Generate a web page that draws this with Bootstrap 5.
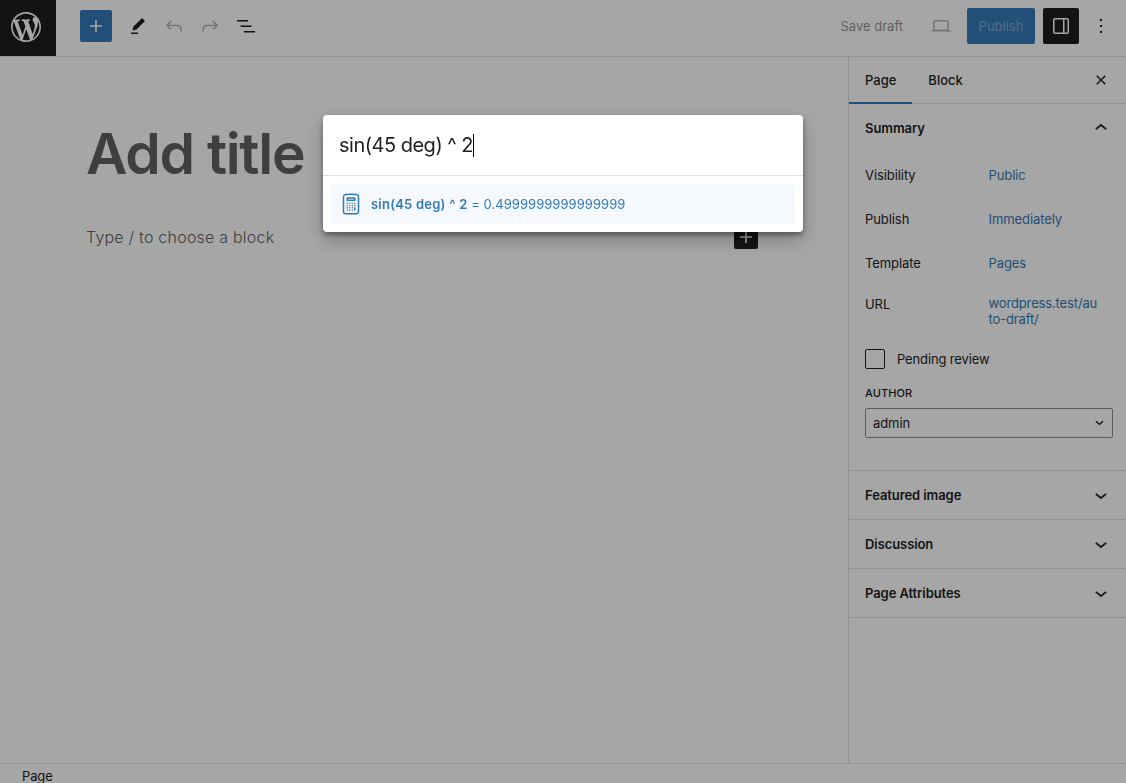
<!DOCTYPE html>
<html lang="en">
<head>
<meta charset="utf-8">
<meta name="viewport" content="width=device-width, initial-scale=1">
<title>Add title</title>
<link href="https://cdn.jsdelivr.net/npm/bootstrap@5.3.0/dist/css/bootstrap.min.css" rel="stylesheet">
<style>
  :root { --accent: #337ab7; --ink: #1e1e1e; --rule: #e0e0e0; }
  body { font-family: Inter, "Liberation Sans", sans-serif; font-size: 13px; line-height: 18px; color: var(--ink); background: #fff; }
  svg { fill: currentColor; display: block; flex: none; }
  .btn { --bs-btn-padding-x: 0; --bs-btn-padding-y: 0; --bs-btn-font-size: 13px; --bs-btn-border-width: 0px; --bs-btn-border-radius: 2px; --bs-btn-color: var(--ink); border-radius: 2px; display: flex; align-items: center; justify-content: center; line-height: 18px; }
  .topbar { height: 57px; border-bottom: 1px solid var(--rule); flex: none; }
  .site-hub { width: 56px; height: 56px; background: var(--ink); color: #fff; padding: 9px 8px; }
  .tool { width: 36px; height: 36px; }
  .inserter { width: 32px; height: 32px; background: var(--accent); color: #fff; }
  .save-draft { color: #949494; }
  .faded { color: #b4b4b4; }
  .laptop { margin: 0 8px 0 20px; }
  .publish { width: 68px; height: 36px; background: #377cba; color: #82a9ce; }
  .dark { background: var(--ink); color: #fff; }
  .more { margin: 0 7px 0 4px; }
  .canvas { padding: 63px 90px 0 86px; }
  .post-title { font-size: 57px; font-weight: 600; line-height: 68px; color: #626262; margin: 0 0 36px; letter-spacing: -1.3px; white-space: nowrap; }
  .prompt { font-size: 16px; line-height: 26px; color: #626262; font-weight: 300; letter-spacing: .22px; }
  .block-add { width: 24px; height: 24px; margin-top: 1px; }
  .sidebar { width: 278px; border-left: 1px solid var(--rule); flex: none; letter-spacing: -.08px; }
  .tabs { height: 47px; border-bottom: 1px solid var(--rule); padding-right: 13px; }
  .tabs .nav-link { padding: 0 16px; height: 47px; color: var(--ink); font-weight: 500; display: flex; align-items: center; letter-spacing: 0; }
  .tabs .nav-link.active { box-shadow: inset 0 -2px var(--accent); }
  .panel-head { height: 49px; padding: 0 13px 0 16px; font-weight: 600; border-bottom: 1px solid var(--rule); }
  .panel-head svg { stroke: currentColor; stroke-width: .35; }
  .panel-open { padding-bottom: 1px; border-bottom: 0; }
  .panel-body { padding: 0 13px 32px 16px; border-bottom: 1px solid var(--rule); }
  .meta-row { height: 44px; }
  .meta-label { width: 123.5px; flex: none; }
  .url-row { height: 64px; padding-top: 10px; line-height: 16px; }
  .url-row .meta-label { padding-top: 1px; }
  .url-row .linked, .pending label { letter-spacing: -.14px; }
  .pending { gap: 12px; height: 20px; margin-bottom: 16px; }
  .linked { color: var(--accent); text-decoration: none; }
  .form-check-input { width: 20px; height: 20px; margin: 0; border: 1px solid var(--ink); }
  .form-check-input[type=checkbox] { border-radius: 2px; }
  .field-label { font-size: 11px; font-weight: 500; line-height: 16px; text-transform: uppercase; letter-spacing: .1px; margin-bottom: 7px; }
  .form-select { height: 30px; font-size: 13px; line-height: 18px; padding: 0 8px 0 7px; border: 1px solid #8c8c8c; border-radius: 2px; background: none; color: var(--ink); }
  .footer-bar { height: 20px; border-top: 1px solid var(--rule); padding: 4px 22px 0; line-height: 17px; flex: none; letter-spacing: -.15px; }
  .screen { background: rgba(0,0,0,.35); }
  .palette { width: 480px; margin: 115px auto 0; border: 0; border-radius: 4px; box-shadow: 0 8px 20px rgba(0,0,0,.25), 0 3px 5px rgba(0,0,0,.35); }
  .query { height: 61px; padding: 0 16px; border-bottom: 1px solid #ddd; font-size: 20px; line-height: 24px; letter-spacing: -.5px; }
  .caret { width: 1px; height: 23px; background: #000; }
  .result { height: 40px; margin: 8px; padding-left: 8px; border-radius: 4px; background: #f5f9fd; color: var(--accent); white-space: pre; letter-spacing: .05px; }
  .result b { letter-spacing: .22px; }
</style>
</head>
<body class="vh-100 overflow-hidden">
<div class="d-flex flex-column vh-100">
  <header class="topbar d-flex align-items-start">
    <div class="site-hub"><svg width="36" height="36" viewBox="-2 -2 24 24"><path d="M20 10c0-5.51-4.49-10-10-10C4.48 0 0 4.49 0 10c0 5.52 4.48 10 10 10 5.51 0 10-4.48 10-10zM7.78 15.37L4.37 6.22c.55-.02 1.17-.08 1.17-.08.5-.06.44-1.13-.06-1.11 0 0-1.45.11-2.37.11-.18 0-.37 0-.58-.01C4.12 2.69 6.87 1.11 10 1.11c2.33 0 4.45.87 6.05 2.34-.68-.11-1.65.39-1.65 1.58 0 .74.45 1.36.9 2.1.35.61.55 1.36.55 2.46 0 1.49-1.4 5-1.4 5l-3.03-8.37c.54-.02.82-.17.82-.17.5-.05.44-1.25-.06-1.22 0 0-1.44.12-2.38.12-.87 0-2.33-.12-2.33-.12-.5-.03-.56 1.2-.06 1.22l.92.08 1.26 3.41zM17.41 10c.24-.64.74-1.87.43-4.25.7 1.29 1.05 2.71 1.05 4.25 0 3.29-1.73 6.24-4.4 7.78.97-2.59 1.94-5.2 2.92-7.78zM6.1 18.09C3.12 16.65 1.11 13.53 1.11 10c0-1.3.23-2.48.72-3.59C3.25 10.3 4.67 14.2 6.1 18.09zm4.03-6.63l2.58 6.98c-.86.29-1.76.45-2.71.45-.79 0-1.57-.11-2.29-.33.81-2.38 1.62-4.74 2.42-7.1z"/></svg></div>
    <div class="d-flex align-items-center flex-grow-1 ps-4 pt-2">
      <button class="btn inserter me-2" aria-label="Add block"><svg width="24" height="24" viewBox="0 0 24 24"><path d="M18 11.2h-5.2V6h-1.6v5.2H6v1.6h5.2V18h1.6v-5.2H18z"/></svg></button>
      <button class="btn tool" aria-label="Tools"><svg width="24" height="24" viewBox="0 0 24 24"><path d="m19 7-3-3-8.5 8.5-1 4 4-1L19 7Zm-7 11.5H5V20h7v-1.5Z"/></svg></button>
      <button class="btn tool faded" aria-label="Undo"><svg width="24" height="24" viewBox="0 0 24 24"><path d="M18.3 11.7c-.6-.6-1.4-.9-2.3-.9H6.7l2.9-3.3-1.1-1-4.5 5L8.5 16l1-1-2.7-2.7H16c.5 0 .9.2 1.3.5 1 1 1 3.4 1 4.5v.3h1.5v-.2c0-1.5 0-4.3-1.5-5.7z"/></svg></button>
      <button class="btn tool faded" aria-label="Redo"><svg width="24" height="24" viewBox="0 0 24 24"><path d="M15.6 6.5l-1.1 1 2.9 3.3H8c-.9 0-1.7.3-2.3.9-1.4 1.5-1.4 4.2-1.4 5.6v.2h1.5v-.3c0-1.1 0-3.5 1-4.5.3-.3.7-.5 1.3-.5h9.2L14.5 15l1.1 1.1 4.6-4.6-4.6-5z"/></svg></button>
      <button class="btn tool" aria-label="Document overview"><svg width="24" height="24" viewBox="0 0 24 24"><path d="M3 6h11v1.5H3V6Zm3.5 5.5h11V13h-11v-1.5ZM21 17H10v1.5h11V17Z"/></svg></button>
      <div class="d-flex align-items-center ms-auto">
        <span class="save-draft">Save draft</span>
        <button class="btn tool faded laptop" aria-label="Preview"><svg width="24" height="24" viewBox="0 0 24 24"><path d="M20.5 16h-.7V8c0-1.1-.9-2-2-2H6.2c-1.1 0-2 .9-2 2v8h-.7c-.8 0-1.5.7-1.5 1.5h20c0-.8-.7-1.5-1.5-1.5zM5.7 8c0-.3.2-.5.5-.5h11.6c.3 0 .5.2.5.5v7.6H5.7V8z"/></svg></button>
        <button class="btn publish me-2">Publish</button>
        <button class="btn tool dark" aria-label="Settings"><svg width="24" height="24" viewBox="0 0 24 24"><path d="M18 4H6c-1.1 0-2 .9-2 2v12c0 1.1.9 2 2 2h12c1.1 0 2-.9 2-2V6c0-1.1-.9-2-2-2zm-4 14.5H6c-.3 0-.5-.2-.5-.5V6c0-.3.2-.5.5-.5h8v13zm4.5-.5c0 .3-.2.5-.5.5h-2.5v-13H18c.3 0 .5.2.5.5v12z"/></svg></button>
        <button class="btn tool more" aria-label="Options"><svg width="24" height="24" viewBox="0 0 24 24"><path d="M13 19h-2v-2h2v2zm0-6h-2v-2h2v2zm0-6h-2V5h2v2z"/></svg></button>
      </div>
    </div>
  </header>

  <div class="d-flex flex-grow-1 overflow-hidden">
    <main class="canvas flex-grow-1">
      <h1 class="post-title">Add title</h1>
      <div class="d-flex justify-content-between">
        <span class="prompt">Type / to choose a block</span>
        <button class="btn dark block-add" aria-label="Add"><svg width="24" height="24" viewBox="0 0 24 24"><path d="M18 11.2h-5.2V6h-1.6v5.2H6v1.6h5.2V18h1.6v-5.2H18z"/></svg></button>
      </div>
    </main>
    <aside class="sidebar">
      <div class="tabs nav flex-nowrap align-items-center">
        <a class="nav-link active">Page</a>
        <a class="nav-link">Block</a>
        <svg class="ms-auto" width="24" height="24" viewBox="0 0 24 24"><path d="M12 13.06l3.712 3.713 1.061-1.06L13.061 12l3.712-3.712-1.06-1.06L12 10.938 8.288 7.227l-1.061 1.06L10.939 12l-3.712 3.712 1.06 1.061L12 13.061z"/></svg>
      </div>
      <div class="panel-head panel-open d-flex justify-content-between align-items-center">Summary<svg width="24" height="24" viewBox="0 0 24 24"><path d="M6.5 12.4L12 8l5.5 4.4-.9 1.2L12 10l-4.5 3.6-1-1.2z"/></svg></div>
      <div class="panel-body">
        <div class="meta-row d-flex align-items-center"><span class="meta-label">Visibility</span><a class="linked">Public</a></div>
        <div class="meta-row d-flex align-items-center"><span class="meta-label">Publish</span><a class="linked">Immediately</a></div>
        <div class="meta-row d-flex align-items-center"><span class="meta-label">Template</span><a class="linked">Pages</a></div>
        <div class="url-row d-flex"><span class="meta-label">URL</span><a class="linked">wordpress.test/au<br>to-draft/</a></div>
        <div class="pending d-flex align-items-center"><input class="form-check-input" type="checkbox" id="pending"><label for="pending">Pending review</label></div>
        <div class="field-label">Author</div>
        <div class="form-select d-flex align-items-center justify-content-between">admin<svg width="9" height="6" viewBox="0 0 10 6"><path d="M1 1l4 3.4L9 1" fill="none" stroke="currentColor" stroke-width="1.5"/></svg></div>
      </div>
      <div class="panel-head d-flex justify-content-between align-items-center">Featured image<svg width="24" height="24" viewBox="0 0 24 24"><path d="M17.5 11.6L12 16l-5.5-4.4.9-1.2L12 14l4.5-3.6 1 1.2z"/></svg></div>
      <div class="panel-head d-flex justify-content-between align-items-center">Discussion<svg width="24" height="24" viewBox="0 0 24 24"><path d="M17.5 11.6L12 16l-5.5-4.4.9-1.2L12 14l4.5-3.6 1 1.2z"/></svg></div>
      <div class="panel-head d-flex justify-content-between align-items-center">Page Attributes<svg width="24" height="24" viewBox="0 0 24 24"><path d="M17.5 11.6L12 16l-5.5-4.4.9-1.2L12 14l4.5-3.6 1 1.2z"/></svg></div>
    </aside>
  </div>
  <footer class="footer-bar">Page</footer>
</div>

<div class="screen modal d-block" role="dialog">
  <div class="palette modal-content">
    <div class="query d-flex align-items-center"><span>sin(45 deg) ^ 2</span><span class="caret"></span></div>
    <div class="result d-flex align-items-center"><svg class="me-2" width="24" height="24" viewBox="0 0 24 24"><path fill="none" stroke="currentColor" stroke-width="1.5" stroke-linecap="round" stroke-linejoin="round" d="M15.75 15.75V18m-7.5-6.75h.008v.008H8.25v-.008zm0 2.25h.008v.008H8.25V13.5zm0 2.25h.008v.008H8.25v-.008zm0 2.25h.008v.008H8.25V18zm2.498-6.75h.007v.008h-.007v-.008zm0 2.25h.007v.008h-.007V13.5zm0 2.25h.007v.008h-.007v-.008zm0 2.25h.007v.008h-.007V18zm2.504-6.75h.008v.008h-.008v-.008zm0 2.25h.008v.008h-.008V13.5zm0 2.25h.008v.008h-.008v-.008zm0 2.25h.008v.008h-.008V18zm2.498-6.75h.008v.008h-.008v-.008zm0 2.25h.008v.008h-.008V13.5zM8.25 6h7.5v2.25h-7.5V6zM12 2.25c-1.892 0-3.758.11-5.593.322C5.307 2.7 4.5 3.65 4.5 4.757V19.5a2.25 2.25 0 002.25 2.25h10.5a2.25 2.25 0 002.25-2.25V4.757c0-1.108-.806-2.057-1.907-2.185A48.507 48.507 0 0012 2.25z"/></svg><span><b class="fw-semibold">sin(45 deg) ^ 2</b> = 0.4999999999999999</span></div>
  </div>
</div>
<script src="https://cdn.jsdelivr.net/npm/bootstrap@5.3.0/dist/js/bootstrap.bundle.min.js"></script>
</body>
</html>
